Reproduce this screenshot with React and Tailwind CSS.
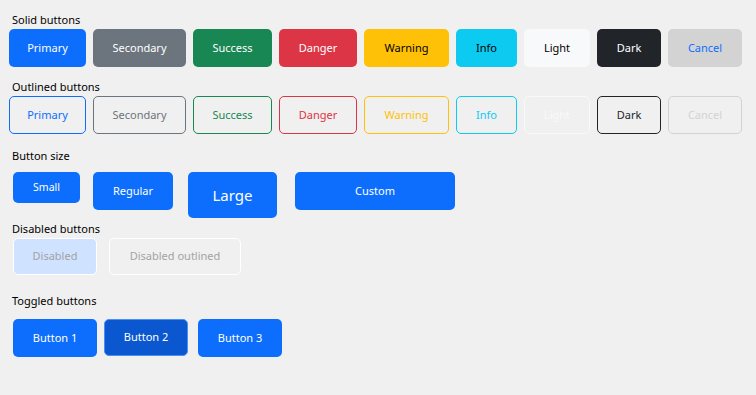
const SOLID = [
  { label: "Primary", w: "w-[77px]", cls: "bg-[#0d6efd] text-white" },
  { label: "Secondary", w: "w-[93px]", cls: "bg-[#6c757d] text-white" },
  { label: "Success", w: "w-[79px]", cls: "bg-[#198754] text-white" },
  { label: "Danger", w: "w-[78px]", cls: "bg-[#dc3545] text-white" },
  { label: "Warning", w: "w-[85px]", cls: "bg-[#ffc107] text-black" },
  { label: "Info", w: "w-[61px]", cls: "bg-[#0dcaf0] text-black" },
  { label: "Light", w: "w-[66px]", cls: "bg-[#f8f9fa] text-black" },
  { label: "Dark", w: "w-[64px]", cls: "bg-[#212529] text-white" },
  { label: "Cancel", w: "w-[74px]", cls: "bg-[#d3d3d3] text-[#0d6efd]" },
];

const OUTLINED = [
  { label: "Primary", w: "w-[77px]", cls: "border-[#0d6efd] text-[#0d6efd]" },
  { label: "Secondary", w: "w-[93px]", cls: "border-[#6c757d] text-[#6c757d]" },
  { label: "Success", w: "w-[79px]", cls: "border-[#198754] text-[#198754]" },
  { label: "Danger", w: "w-[78px]", cls: "border-[#dc3545] text-[#dc3545]" },
  { label: "Warning", w: "w-[85px]", cls: "border-[#ffc107] text-[#ffc107]" },
  { label: "Info", w: "w-[61px]", cls: "border-[#0dcaf0] text-[#0dcaf0]" },
  { label: "Light", w: "w-[66px]", cls: "border-[#f8f9fa] text-[#f8f9fa]" },
  { label: "Dark", w: "w-[64px]", cls: "border-[#212529] text-[#212529]" },
  { label: "Cancel", w: "w-[74px]", cls: "border-[#d3d3d3] text-[#d3d3d3]" },
];

function Label({ children, className = "" }) {
  return (
    <p className={`ml-[12px] h-4 text-[11px] leading-4 text-black ${className}`}>
      {children}
    </p>
  );
}

function Btn({ children, className = "" }) {
  return (
    <button
      type="button"
      className={`flex items-center justify-center rounded-[5px] ${className}`}
    >
      {children}
    </button>
  );
}

export default function App() {
  return (
    <div
      className="h-[395px] w-[756px] overflow-hidden bg-[#f0f0f0] pt-[12px]"
      style={{ fontFamily: '"Segoe UI", "Noto Sans", sans-serif' }}
    >
      <Label>Solid buttons</Label>
      <div className="mt-[1px] ml-[9px] flex gap-[7px]">
        {SOLID.map((b) => (
          <Btn key={b.label} className={`h-[38px] text-[11px] ${b.w} ${b.cls}`}>
            {b.label}
          </Btn>
        ))}
      </div>

      <Label className="mt-[12px]">Outlined buttons</Label>
      <div className="mt-[1px] ml-[9px] flex gap-[7px]">
        {OUTLINED.map((b) => (
          <Btn key={b.label} className={`h-[38px] border text-[11px] ${b.w} ${b.cls}`}>
            {b.label}
          </Btn>
        ))}
      </div>

      <Label className="mt-[14px]">Button size</Label>
      <div className="mt-[8px] ml-[13px] flex items-start">
        <Btn className="h-[31px] w-[67px] bg-[#0d6efd] text-[10.5px] text-white">Small</Btn>
        <Btn className="ml-[13px] h-[38px] w-[80px] bg-[#0d6efd] text-[11px] text-white">Regular</Btn>
        <Btn className="ml-[15px] h-[46px] w-[89px] bg-[#0d6efd] text-[15px] text-white">Large</Btn>
        <Btn className="ml-[18px] h-[38px] w-[160px] bg-[#0d6efd] text-[11px] text-white">Custom</Btn>
      </div>

      <Label className="mt-[3px]">Disabled buttons</Label>
      <div className="mt-[1px] ml-[13px] flex gap-[12px]">
        <Btn className="h-[37px] w-[84px] border border-white bg-[#cfe2ff] text-[11px] text-[#a3a3a3]">Disabled</Btn>
        <Btn className="h-[37px] w-[132px] border border-white text-[11px] text-[#a3a3a3]">Disabled outlined</Btn>
      </div>

      <Label className="mt-[18px]">Toggled buttons</Label>
      <div className="mt-[10px] ml-[13px] flex">
        <Btn className="h-[38px] w-[84px] bg-[#0d6efd] text-[11px] text-white">Button 1</Btn>
        <Btn className="ml-[7px] h-[37px] w-[84px] border border-[#4a8ff5] bg-[#0b57d0] text-[11px] text-white">Button 2</Btn>
        <Btn className="ml-[10px] h-[38px] w-[84px] bg-[#0d6efd] text-[11px] text-white">Button 3</Btn>
      </div>
    </div>
  );
}
